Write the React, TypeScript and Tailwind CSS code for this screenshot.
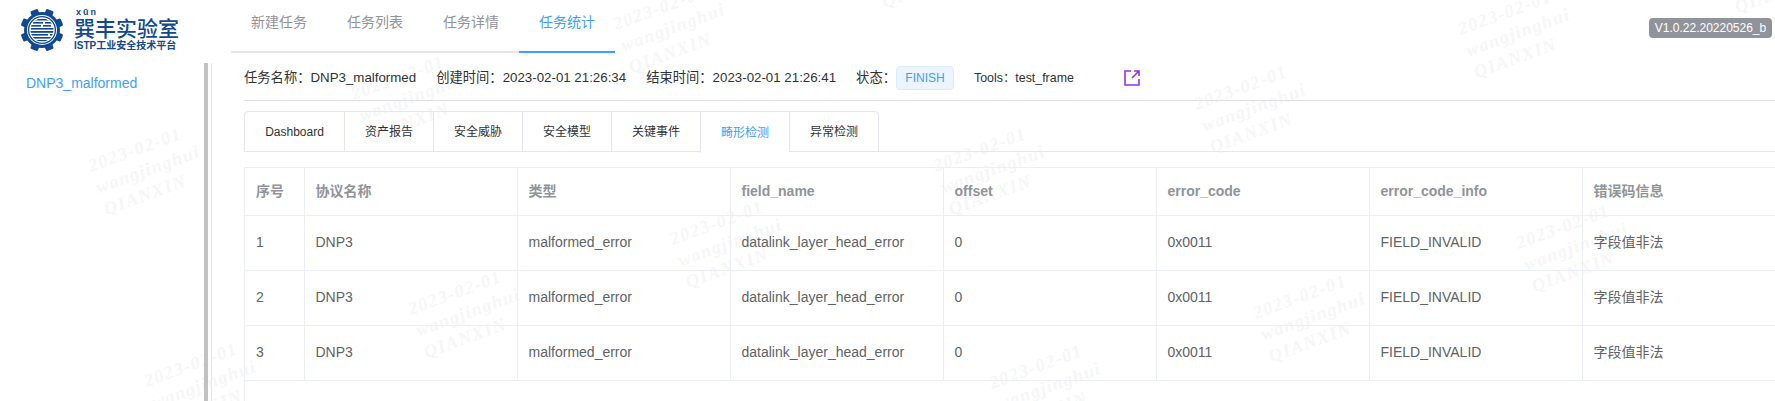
import React from 'react';

const topTabs = ['新建任务', '任务列表', '任务详情', '任务统计'];
const subTabs = ['Dashboard', '资产报告', '安全威胁', '安全模型', '关键事件', '畸形检测', '异常检测'];
const headers = ['序号', '协议名称', '类型', 'field_name', 'offset', 'error_code', 'error_code_info', '错误码信息'];
const rows = [1, 2, 3];

// start point of the first line of each watermark stamp
const stamps = [
  [610, 28], [1455, 33], [348, 98], [1191, 108], [930, 170], [85, 170], [405, 313], [141, 385],
  [667, 243], [986, 387], [1513, 247], [1250, 317], [1716, -32], [863, -37], [1772, 177],
];

const Watermark: React.FC<{ x: number; y: number }> = ({ x, y }) => (
  <div
    className="absolute origin-top-left -rotate-20 font-['Liberation_Serif',serif] text-[18px] leading-[23px] font-bold italic tracking-[1.4px] whitespace-nowrap text-[#f6f6f7] pointer-events-none"
    style={{ left: x, top: y - 14 }}
  >
    <div>2023-02-01</div>
    <div>wangjinghui</div>
    <div>QIANXIN</div>
  </div>
);

const GearLogo: React.FC = () => (
  <svg width="44" height="44" viewBox="0 0 44 44" className="shrink-0">
    <defs>
      <clipPath id="globe">
        <circle cx="22" cy="22" r="11.5" />
      </clipPath>
    </defs>
    {[0, 45, 90, 135, 180, 225, 270, 315].map((deg) => (
      <rect key={deg} x="18" y="0.5" width="8" height="8" rx="1.5" fill="#10498f" transform={`rotate(${deg + 22.5} 22 22)`} />
    ))}
    <circle cx="22" cy="22" r="18" fill="#10498f" />
    <circle cx="22" cy="22" r="15" fill="#fff" />
    <circle cx="22" cy="22" r="13.4" fill="none" stroke="#10498f" strokeWidth="1.3" />
    <g clipPath="url(#globe)" fill="#10498f">
      <rect x="12" y="11" width="20" height="1.5" />
      <rect x="13" y="14" width="10" height="1.6" />
      <rect x="25" y="14" width="8" height="1.6" />
      <rect x="9" y="17" width="12" height="1.6" />
      <rect x="23" y="17" width="8" height="1.6" />
      <rect x="11" y="20" width="24" height="1.6" />
      <rect x="10" y="23" width="24" height="1.8" />
      <rect x="11" y="26" width="17" height="1.6" />
      <rect x="30" y="26" width="4" height="1.6" />
      <rect x="13" y="29" width="19" height="1.6" />
      <rect x="16" y="32" width="12" height="1.4" />
    </g>
  </svg>
);

const App: React.FC = () => {
  return (
    <div className="relative w-[1775px] h-[401px] overflow-hidden bg-white font-['Liberation_Sans','Noto_Sans_CJK_SC',sans-serif]">
      {stamps.map(([x, y]) => (
        <Watermark key={`${x}-${y}`} x={x} y={y} />
      ))}

      <header className="relative flex h-[63px]">
        <div className="flex w-[231px] shrink-0 pl-[20px] pt-[8px]">
          <GearLogo />
          <div className="ml-[10px] flex flex-col text-[#10498f]">
            <span className="h-[9px] pl-[2px] text-[9px] leading-[9px] font-bold tracking-[2px]">xūn</span>
            <span className="text-[21px] leading-[23px] font-medium">巽丰实验室</span>
            <span className="text-[10px] leading-[11px] font-bold whitespace-nowrap">ISTP工业安全技术平台</span>
          </div>
        </div>
        <nav className="flex h-[53px] border-b-2 border-[#e4e7ed]">
          {topTabs.map((tab) => (
            <div
              key={tab}
              className={`flex w-[96px] items-center justify-center pb-[6px] text-[14px] ${
                tab === '任务统计' ? 'text-[#409eff] border-b-2 border-[#409eff] -mb-[2px]' : 'text-[#909399]'
              }`}
            >
              {tab}
            </div>
          ))}
        </nav>
        <div className="ml-auto mr-[3px] mt-[18px] flex h-[20px] w-[123px] items-center justify-center rounded-[4px] bg-[#909399] text-[12px] text-white">
          V1.0.22.20220526_b
        </div>
      </header>

      <div className="relative flex h-[338px]">
        <aside className="w-[204px] shrink-0 pl-[26px] pt-[11px] text-[14px] leading-[18px] text-[#409eff]">
          DNP3_malformed
        </aside>
        <div className="w-[4px] shrink-0 bg-[#c1c1c1]" />
        <div className="ml-[3px] flex-1 min-w-0 border-l border-[#e4e7ed] pl-[32px]">
          <div className="flex h-[38px] items-center gap-[20px] border-b border-[#dcdfe6] pb-[7px] text-[13.3px] text-[#303133] whitespace-nowrap">
            <span>任务名称：DNP3_malformed</span>
            <span>创建时间：2023-02-01 21:26:34</span>
            <span>结束时间：2023-02-01 21:26:41</span>
            <span className="flex items-center">
              状态：
              <span className="flex h-[24px] w-[58px] items-center justify-center rounded-[4px] border border-[#d9ecff] bg-[#ecf5ff] text-[12px] text-[#409eff]">
                FINISH
              </span>
            </span>
            <span className="text-[12.4px]">Tools：test_frame</span>
            <svg width="18" height="18" viewBox="0 0 18 18" fill="none" stroke="#9333ea" strokeWidth="1.6" className="ml-[29px]">
              <path d="M8 2H2v14h14v-6" />
              <path d="M9 9l7-7M11 2h5v5" />
            </svg>
          </div>

          <div className="mt-[10px] flex h-[41px] border-b border-[#e4e7ed]">
            <div className="flex h-[41px] rounded-t-[4px] border border-[#e4e7ed] text-[12px] text-[#303133]">
              {subTabs.map((tab, i) => (
                <div
                  key={tab}
                  className={`flex items-center justify-center ${i === 0 ? 'w-[99px]' : 'w-[89px] border-l border-[#e4e7ed]'} ${
                    tab === '畸形检测' ? 'h-[41px] bg-white text-[#409eff]' : 'h-[39px]'
                  }`}
                >
                  {tab}
                </div>
              ))}
            </div>
          </div>

          <div className="mt-[15px] h-[234px] overflow-hidden border-l border-t border-[#ebeef5]">
            <table className="w-[1550px] table-fixed border-collapse text-[14px] text-[#606266]">
              <colgroup>
                <col className="w-[59px]" />
                {headers.slice(1).map((h) => (
                  <col key={h} className="w-[213px]" />
                ))}
              </colgroup>
              <thead>
                <tr className="h-[47px] border-b border-[#ebeef5]">
                  {headers.map((h) => (
                    <th key={h} className="border-r border-[#ebeef5] pl-[11px] text-left font-bold text-[#909399]">
                      {h}
                    </th>
                  ))}
                </tr>
              </thead>
              <tbody>
                {rows.map((n) => (
                  <tr key={n} className="h-[55px] border-b border-[#ebeef5]">
                    <td className="border-r border-[#ebeef5] pl-[11px]">{n}</td>
                    <td className="border-r border-[#ebeef5] pl-[11px]">DNP3</td>
                    <td className="border-r border-[#ebeef5] pl-[11px]">malformed_error</td>
                    <td className="border-r border-[#ebeef5] pl-[11px]">datalink_layer_head_error</td>
                    <td className="border-r border-[#ebeef5] pl-[11px]">0</td>
                    <td className="border-r border-[#ebeef5] pl-[11px]">0x0011</td>
                    <td className="border-r border-[#ebeef5] pl-[11px]">FIELD_INVALID</td>
                    <td className="border-r border-[#ebeef5] pl-[11px]">字段值非法</td>
                  </tr>
                ))}
              </tbody>
            </table>
          </div>
        </div>
      </div>
    </div>
  );
};

export default App;
